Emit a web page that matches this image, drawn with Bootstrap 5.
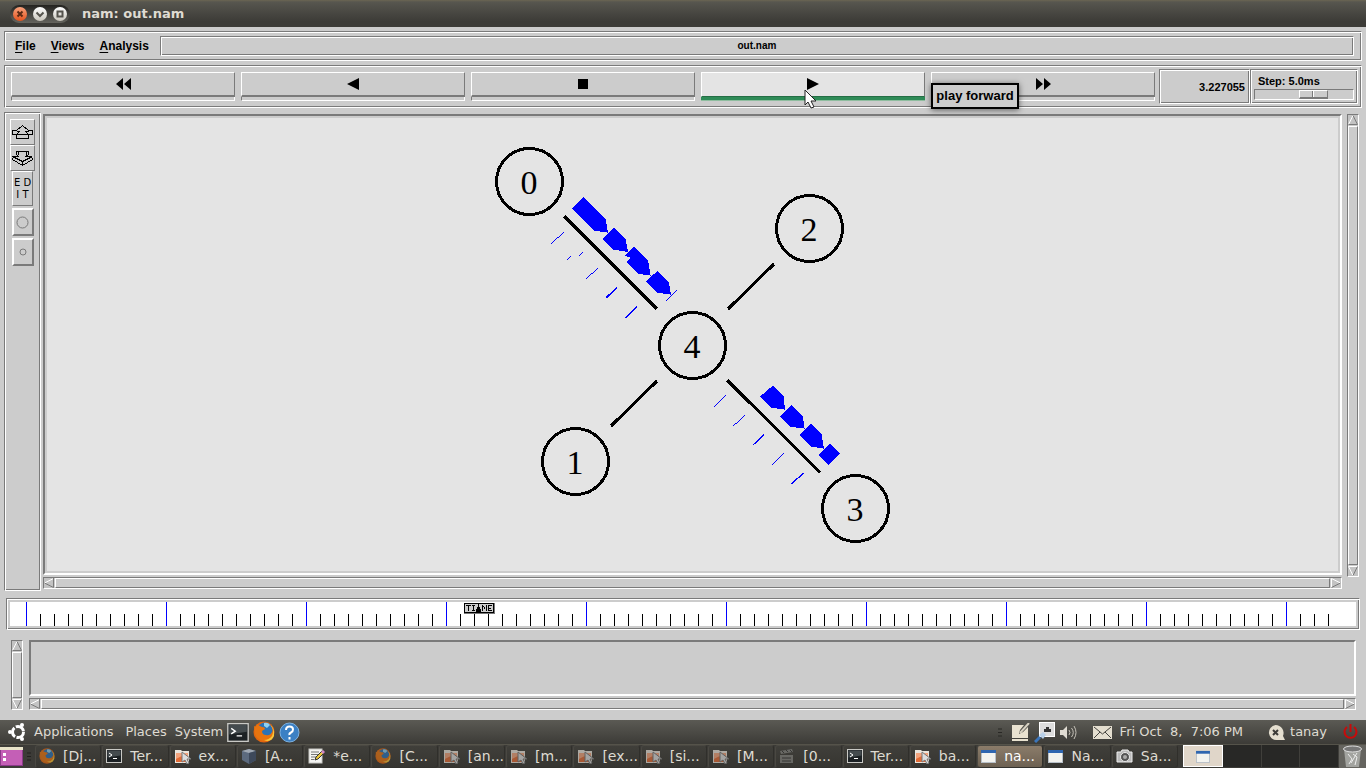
<!DOCTYPE html>
<html lang="en">
<head>
<meta charset="utf-8">
<meta name="viewport" content="width=device-width, initial-scale=1">
<title>nam: out.nam</title>
<link href="https://cdn.jsdelivr.net/npm/bootstrap@5.3.0/dist/css/bootstrap.min.css" rel="stylesheet">
<style>
:root { --face:#cccccc; --dark:#7a7a7a; --cream:#dfdbd2; }
body { background:var(--face); color:#000; font:bold 12px/16px "Liberation Sans",Arial,sans-serif; overflow:hidden; }
button { font:inherit; color:inherit; border-radius:0; padding:0; }
.shape { display:block; flex:none; }
/* window frame */
.titlebar { height:27px; padding-left:10px; background:linear-gradient(#6b6552 0,#57564f 2px,#3c3b37 80%); color:var(--cream); font:bold 13px/26px "DejaVu Sans",sans-serif; }
.winbtns { height:18px; padding:0 3px; gap:6px; border-radius:9px; background:linear-gradient(#24231f,#65645e); margin-right:12px; }
.winbtns button { width:14px; height:14px; border:0; border-radius:50%; background:linear-gradient(#fff,#c9c5bb); display:flex; }
.winbtns .closer { background:linear-gradient(#f8a27c,#e4521d); }
/* Motif-like reliefs */
.groove { border:1px solid; border-color:var(--dark) #fff #fff var(--dark); box-shadow:inset 1px 1px #fff,inset -1px -1px var(--dark); }
.raised { border:1px solid; border-color:#fff var(--dark) var(--dark) #fff; background:var(--face); }
.raised2 { border:2px solid; border-color:#fff var(--dark) var(--dark) #fff; background:var(--face); }
.sunk { border:2px solid; border-color:var(--dark) #fff #fff var(--dark); }
.menubox { height:30px; margin:4px 4px 4px; padding:4px 7px 5px 10px; }
.menubox .item { color:#000; text-decoration:none; margin-right:15px; line-height:20px; }
.menubox .item::first-letter { text-decoration:underline; text-underline-offset:2px; }
.filename { height:20px; line-height:18px; margin-left:-4px; }
.compact { font-size:11px; }
.filename.compact { font-size:10px; }
.toolbox { height:43px; margin:0 4px; padding:3px 3px 2px 2px; }
.playrow { padding:3px 4px 0 4px; gap:6px; }
.playbtn { height:29px; border:0; background:none; width:100%; }
.playbtn .top { flex:1; border:1px solid; border-color:#fff var(--dark) var(--dark) #fff; border-bottom-width:2px; }
.playbtn .strip { height:4px; border:1px solid; border-color:transparent #fff #fff var(--dark); border-top:0; }
.playbtn.hot .top { background:#e4e4e4; border-bottom:1px solid #246e45; padding-bottom:1px; }
.playbtn.hot .strip { background:#2e8b57; border:0; border-bottom:1px solid #8fbd9f; }
.tip { left:calc(100% + 6px); top:11px; width:88px; height:26px; border:2px solid #000; background:var(--face); font-size:13px; line-height:22px; text-align:center; white-space:nowrap; box-shadow:0 1px 6px rgba(0,0,0,.55); z-index:5; }
.pointer { left:calc(50% - 9px); top:17px; z-index:6; pointer-events:none; }
.clock { width:91px; height:35px; padding-right:4px; }
.stepper { width:108px; height:35px; padding:3px 3px 0; }
.stepper label { line-height:16px; padding-left:4px; display:block; }
.stepper input { appearance:none; display:block; width:100%; height:11px; margin:0; background:var(--face); border:1px solid; border-color:var(--dark) #fff #fff var(--dark); }
.stepper input::-webkit-slider-thumb { appearance:none; width:29px; height:9px; border:1px solid; border-color:#fff var(--dark) var(--dark) #fff; border-bottom-width:2px; background:linear-gradient(90deg,var(--face) 12px,var(--dark) 12px,var(--dark) 13px,#fff 13px,#fff 14px,var(--face) 14px); }
/* work area */
.workarea { margin:4px 7px 0 4px; }
.sidebox { width:37px; padding:6px 5px; }
.sidebox button { display:flex; align-items:center; justify-content:center; }
.w25 { width:25px; height:26px; }
.edit { width:21px; height:35px; font:10px/12px "DejaVu Sans",sans-serif; margin-bottom:2px; }
.ring { width:22px; height:28px; margin-bottom:2px; }
.stage { background:#e4e4e4; outline:2px solid var(--face); outline-offset:-4px; }
.canvascol { padding-top:2px; margin:0 5px 2px 2px; }
.vbar { margin:2px 0 14px; }
.below { margin-top:2px; }
.nodes circle { fill:none; stroke:#000; stroke-width:3; }
.nodes text { font:34px "Liberation Serif",serif; text-anchor:middle; }
/* scrollbars */
.sbar { background:var(--face); border:1px solid; border-color:var(--dark) #fff #fff var(--dark); display:flex; gap:1px; flex:none; }
.sbar.h { height:12px; }
.sbar.v { width:12px; flex-direction:column; }
.sbar button { border:0; background:none; width:10px; height:10px; flex:none; }
.sbar .grip { flex:1; }
.timeline { height:32px; margin:7px 6px 0; padding:3px; }
.timeline .scale { background:#fff; height:24px; }
.timetag { left:454px; top:1px; }
.notes { margin:10px 10px 10px 11px; height:70px; gap:6px; }
/* desktop panels */
.panel { background:linear-gradient(#5b5a54,#3c3b37); height:24px; color:var(--cream); font:14px/22px "DejaVu Sans",sans-serif; }
.panel a { color:var(--cream); text-decoration:none; font-size:13px; line-height:22px; }
.tasks { height:24px; background:#3c3b37; border-top:1px solid #55534a; color:var(--cream); }
.task { flex:1 1 0; min-width:0; border:1px solid #33322e; border-color:#4b4943 #302f2b #33322e #4a4842; border-radius:3px; background:linear-gradient(#403f3a,#363531); color:var(--cream); font:14px/20px "DejaVu Sans",sans-serif; padding:0 0 2px 3px; gap:8px; display:flex; align-items:center; margin-right:1px; white-space:nowrap; }
.task.cur { background:linear-gradient(#8b7c6a,#6d6152); color:#fff; }
.task.dim svg { opacity:.65; }
.pager { width:156px; height:22px; background:#282826; }
.pager div { flex:1; border-right:1px solid #403f3b; }
.pager .on { background:#e0d6c9; border:1px solid #fff; }
</style>
</head>
<body class="d-flex flex-column vh-100">
<svg width="0" height="0" class="position-absolute" aria-hidden="true">
 <defs>
  <symbol id="al" viewBox="0 0 10 10"><rect width="10" height="10" fill="#c3c3c3"/><path d="M9.500 .5L.5 5" stroke="#fff" fill="none"/><path d="M.5 5L9.500 9.500V0" stroke="#7a7a7a" fill="none"/></symbol>
  <symbol id="ar" viewBox="0 0 10 10"><rect width="10" height="10" fill="#c3c3c3"/><path d="M.5 9.500V.5L9.500 5" stroke="#fff" fill="none"/><path d="M9.500 5L.5 9.500" stroke="#7a7a7a" fill="none"/></symbol>
  <symbol id="au" viewBox="0 0 10 10"><rect width="10" height="10" fill="#c3c3c3"/><path d="M.5 9.500L5 .5" stroke="#fff" fill="none"/><path d="M5 .5L9.500 9.500H.5" stroke="#7a7a7a" fill="none"/></symbol>
  <symbol id="ad" viewBox="0 0 10 10"><rect width="10" height="10" fill="#c3c3c3"/><path d="M9.500 .5H.5L5 9.500" stroke="#fff" fill="none"/><path d="M5 9.500L9.500 .5" stroke="#7a7a7a" fill="none"/></symbol>
  <symbol id="term" viewBox="0 0 16 14"><rect x=".5" y=".5" width="15" height="13" fill="#1c2124" stroke="#c9c9c5"/><path d="M1.500 1.500h13v5l-13 2z" fill="#444b4e"/><path d="M3 4l3 2-3 2M7 9.500h4" stroke="#fff" fill="none"/></symbol>
  <symbol id="fox" viewBox="0 0 22 22"><circle cx="11" cy="11" r="10.500" fill="#e2660f"/><circle cx="12" cy="9" r="7.500" fill="#2a73b8"/><path d="M11 2q4-1 6 2l-3 3-3-2z" fill="#8fd0ef"/><path d="M1 5l2 1 1-3q2 2 5 3 3 0 3 2l-3 2q0 4 4 4 4 1 6-3 2 0 1 3-3 6-9 6-7-1-9-7z" fill="#e8740f"/><path d="M17 4q5 5 2 11-3 4-8 4 7 3 10-4 1-8-4-11z" fill="#f9c63a"/></symbol>
  <symbol id="fold" viewBox="0 0 17 16"><path d="M1 15V2h6l1 1h7v12z" fill="#e9e4dc"/><path d="M2 14V5h12v9z" fill="#e26b36"/><path d="M2 5h12v3q-6-1-12 3z" fill="#f2a37c"/><path d="M8 4v10l3-2 2 4 2-1-2-4h4z" fill="#ddd" stroke="#777"/></symbol>
  <symbol id="cube" viewBox="0 0 16 16"><path d="M8 1l7 2v9l-7 4-7-4V3z" fill="#5c6a7e"/><path d="M8 1l7 2-7 2-7-2z" fill="#a0a8b3"/><path d="M8 5l7-2v9l-7 4z" fill="#3e495b"/></symbol>
  <symbol id="note" viewBox="0 0 17 16"><rect x="1" y="1" width="13" height="14" fill="#f4f4f2" stroke="#c8c8c4"/><path d="M3 4h8M3 6.500h7M3 9h6M3 11.500h3" stroke="#777"/><path d="M7 12l1-3 6-6 2 2-6 6z" fill="#e9c53b" stroke="#333"/><path d="M13 4l2-2 2 2-2 2z" fill="#d58ac9"/></symbol>
  <symbol id="film" viewBox="0 0 16 16"><path d="M1 7h13v8H1zM1 3l12-2 1 3L2 6z" fill="#81817d"/><path d="M3 3l2 2M7 2l2 2M11 2l2 2M3 10h9M3 13h9" stroke="#333"/></symbol>
  <symbol id="win" viewBox="0 0 15 14"><rect x=".5" y="1.500" width="14" height="12" fill="#f3f3ef" stroke="#b8c0c8"/><path d="M0 1h15v3H0z" fill="#2f66b0"/></symbol>
  <symbol id="cam" viewBox="0 0 17 16"><path d="M1 4h4l1-2h6l1 2h3v10H1z" fill="#bbb" stroke="#eee"/><circle cx="9" cy="9" r="4.500" fill="#555" stroke="#e9e9e9"/><circle cx="9" cy="9" r="2" fill="#aaa"/></symbol>
 </defs>
</svg>

<header class="titlebar d-flex align-items-center flex-shrink-0">
 <div class="winbtns d-flex align-items-center">
  <button class="closer" aria-label="Close"><svg class="shape" width="14" height="14"><path d="M4.500 4.500l5 5m0-5l-5 5" stroke="#5c2a14" stroke-width="2"/></svg></button>
  <button aria-label="Minimize"><svg class="shape" width="14" height="14"><path d="M3.500 5.500L7 9l3.500-3.500" stroke="#55534c" stroke-width="2" fill="none"/></svg></button>
  <button aria-label="Maximize"><svg class="shape" width="14" height="14"><rect x="4.500" y="4.500" width="5" height="5" stroke="#55534c" stroke-width="2" fill="none"/></svg></button>
 </div>
 <span>nam: out.nam</span>
</header>

<nav class="menubox groove d-flex flex-shrink-0">
 <a class="item d-block" href="#">File</a><a class="item d-block" href="#">Views</a><a class="item d-block" href="#">Analysis</a>
 <div class="filename groove compact flex-grow-1 text-center">out.nam</div>
</nav>

<section class="toolbox groove d-flex flex-shrink-0">
 <div class="playrow d-flex flex-grow-1">
  <div class="flex-fill w-100"><button class="playbtn d-flex flex-column align-items-stretch" aria-label="Rewind"><span class="top d-flex justify-content-center align-items-center"><svg class="shape" width="15" height="12"><path d="M0 6l7-6v12zM8 6l7-6v12z"/></svg></span><span class="strip"></span></button></div>
  <div class="flex-fill w-100"><button class="playbtn d-flex flex-column align-items-stretch" aria-label="Play backward"><span class="top d-flex justify-content-center align-items-center"><svg class="shape" width="12" height="12"><path d="M0 6l12-6v12z"/></svg></span><span class="strip"></span></button></div>
  <div class="flex-fill w-100"><button class="playbtn d-flex flex-column align-items-stretch" aria-label="Stop"><span class="top d-flex justify-content-center align-items-center"><svg class="shape" width="10" height="10"><path d="M0 0h10v10H0z"/></svg></span><span class="strip"></span></button></div>
  <div class="flex-fill w-100 position-relative"><button class="playbtn hot d-flex flex-column align-items-stretch" aria-label="Play forward"><span class="top d-flex justify-content-center align-items-center"><svg class="shape" width="12" height="12"><path d="M0 0l12 6-12 6z"/></svg></span><span class="strip"></span></button>
   <div class="tip position-absolute">play forward</div>
   <svg class="pointer position-absolute" width="13" height="20"><path d="M1 1v15l3-3 3 6 3-1-3-6h5z" fill="#fff" stroke="#222"/></svg>
  </div>
  <div class="flex-fill w-100"><button class="playbtn d-flex flex-column align-items-stretch" aria-label="Fast forward"><span class="top d-flex justify-content-center align-items-center"><svg class="shape" width="15" height="12"><path d="M0 0l7 6-7 6zM8 0l7 6-7 6z"/></svg></span><span class="strip"></span></button></div>
 </div>
 <div class="clock groove compact d-flex align-items-center justify-content-end flex-shrink-0">3.227055</div>
 <div class="stepper groove compact flex-shrink-0"><label for="step">Step: 5.0ms</label><input id="step" type="range" min="0" max="100" value="64"></div>
</section>

<main class="workarea d-flex flex-grow-1">
 <aside class="sidebox groove flex-shrink-0 d-flex flex-column align-items-center">
  <button class="w25 raised" aria-label="Zoom in"><svg class="shape" width="21" height="15" fill="none" stroke="#000" shape-rendering="crispEdges"><path d="M10.500 .5l6 5h4v4h-4v4h-12v-4h-4v-4h4z M4.500 9.500l3-3h-3M16.500 9.500l-3-3h3M5 9.500h11"/></svg></button>
  <button class="w25 raised" aria-label="Zoom out"><svg class="shape" width="21" height="15" fill="none" stroke="#000" shape-rendering="crispEdges"><path d="M4.500 .5h12v3l-3 2h6l1 3-10 6-10-6 1-3h5l-2-2zM.5 5.500l10 5 10-5M10.500 10v4M6.500 .5v3M14.500 .5v3"/></svg></button>
  <button class="edit raised">E D<br>I T</button>
  <button class="ring raised2" aria-label="Larger nodes"><svg class="shape" width="13" height="13"><circle cx="6.500" cy="6.500" r="5.500" fill="none" stroke="#7a7a7a"/></svg></button>
  <button class="ring raised2" aria-label="Smaller nodes"><svg class="shape" width="8" height="8"><circle cx="4" cy="4" r="3" fill="none" stroke="#7a7a7a"/></svg></button>
 </aside>
 <div class="canvascol d-flex flex-column flex-grow-1">
  <div class="stage sunk flex-grow-1 d-flex align-items-center justify-content-center">
   <svg class="nodes" width="461" height="440" viewBox="462 125 461 440">
    <g shape-rendering="crispEdges">
    <circle cx="529.500" cy="181.500" r="33"/><circle cx="809.500" cy="228.500" r="33"/><circle cx="692.500" cy="345.500" r="33"/><circle cx="575.500" cy="461.500" r="33"/><circle cx="855.500" cy="508.500" r="33"/>
    <path d="M564.500 216.500L657 309M727.500 380.500L820 472.500M728 309L774 264M657 381L611 426" stroke="#000" stroke-width="3"/>
    </g>
    <text x="529" y="194">0</text><text x="809" y="241">2</text><text x="692" y="358">4</text><text x="575" y="474">1</text><text x="855" y="521">3</text>
    <g transform="translate(480 130) scale(.33333)" fill="#00f" shape-rendering="crispEdges">
     <path d="M310 202l67 65 7 41-41-6-66-66zM402 294l35 34 7 38-43-7-34-32zM462 351l42 40 8 46-39-6-34-34 14-13-17-7zM532 423l34 32 7 39-43-6-33-33z"/>
     <path d="M213 342l38-35M262 389l10-10M297 377l11-10M319 446l34-31M558 513l32-32" stroke="#00f" stroke-width="3"/>
     <path d="M379 503l33-31M436 564l34-34" stroke="#00f" stroke-width="5"/>
    </g>
    <g transform="translate(690 300) scale(.33333)" fill="#00f" shape-rendering="crispEdges">
     <path d="M248 257l33 32 4 40-41-6-34-33zM305 315l33 33 6 38-43-6-31-31zM363 371l31 29 8 46-41-7-33-33zM420 432l30 30-33 33-32-30z"/>
     <path d="M72 321l35-35M130 378l35-32" stroke="#00f" stroke-width="3"/>
     <path d="M190 434l33-31M247 494l34-34M304 551l37-31" stroke="#00f" stroke-width="4"/>
    </g>
   </svg>
  </div>
  <div class="sbar h below"><button aria-label="Scroll left"><svg class="shape" width="10" height="10"><use href="#al"/></svg></button><div class="grip raised"></div><button aria-label="Scroll right"><svg class="shape" width="10" height="10"><use href="#ar"/></svg></button></div>
 </div>
 <div class="sbar v vbar"><button aria-label="Scroll up"><svg class="shape" width="10" height="10"><use href="#au"/></svg></button><div class="grip raised"></div><button aria-label="Scroll down"><svg class="shape" width="10" height="10"><use href="#ad"/></svg></button></div>
</main>

<section class="timeline groove flex-shrink-0">
 <div class="scale position-relative">
  <svg class="shape" width="100%" height="24" shape-rendering="crispEdges">
   <defs><pattern id="ticks" x="16" y="0" width="140" height="24" patternUnits="userSpaceOnUse"><path d="M0 0h1v24H0z" fill="#00f"/><path d="M14 12h1v12h-1zM28 12h1v12h-1zM42 12h1v12h-1zM56 12h1v12h-1zM70 12h1v12h-1zM84 12h1v12h-1zM98 12h1v12h-1zM112 12h1v12h-1zM126 12h1v12h-1z"/></pattern></defs>
   <rect x="16" width="1310" height="24" fill="url(#ticks)"/>
  </svg>
  <svg class="timetag position-absolute" width="31" height="11" shape-rendering="crispEdges" fill="none" stroke="#000"><path d="M0 0h31v11H0z" fill="#777" stroke="none"/><path d="M.5 .5h29v9H.5z" fill="#ccc"/><path d="M2 2.500h5M4.500 2v6M8 2.500h3M9.500 2v6M8 7.500h3M18.500 8V2M19 3.500h1M20.500 4v2M21.500 3.500h1M22.500 2v6M28 2.500h-3.500v5H28M25 5.500h2"/><path d="M14 0h1v4h1v2h1v3h-5V6h1V4h1z" fill="#000" stroke="none"/></svg>
 </div>
</section>

<section class="notes d-flex flex-shrink-0">
 <div class="sbar v"><button aria-label="Scroll up"><svg class="shape" width="10" height="10"><use href="#au"/></svg></button><div class="grip raised"></div><button aria-label="Scroll down"><svg class="shape" width="10" height="10"><use href="#ad"/></svg></button></div>
 <div class="d-flex flex-column flex-grow-1"><div class="sunk flex-grow-1"></div>
 <div class="sbar h below"><button aria-label="Scroll left"><svg class="shape" width="10" height="10"><use href="#al"/></svg></button><div class="grip raised"></div><button aria-label="Scroll right"><svg class="shape" width="10" height="10"><use href="#ar"/></svg></button></div></div>
</section>

<nav class="panel d-flex align-items-center flex-shrink-0 px-2">
 <svg class="shape me-2" width="18" height="18"><circle cx="10" cy="9" r="5.500" fill="none" stroke="#fff" stroke-width="3" stroke-dasharray="10 1.500"/><circle cx="2" cy="9" r="2" fill="#fff"/><circle cx="14" cy="2" r="2" fill="#fff"/><circle cx="14" cy="16" r="2" fill="#fff"/></svg>
 <a href="#" class="me-2">Applications</a><a href="#" class="ms-1 me-2">Places</a><a href="#" class="me-1">System</a>
 <svg class="shape me-1" width="22" height="19"><use href="#term"/></svg>
 <svg class="shape me-1" width="22" height="22"><use href="#fox"/></svg>
 <svg class="shape" width="21" height="21"><circle cx="10.500" cy="10.500" r="9.500" fill="#3b80c4" stroke="#7db2e2"/><path d="M7 8q0-3.500 3.500-3.500T14 7.500q0 2-2 3t-1.500 2.500M10.500 15v2.500" stroke="#fff" stroke-width="2" fill="none"/></svg>
 <span class="flex-grow-1"></span>
 <svg class="shape me-2" width="5" height="9"><path d="M0 1h4M0 4.500h4M0 8h4" stroke="#292825"/></svg>
 <svg class="shape me-1" width="19" height="19"><path d="M1 2h12l-4 5-1 4 4-2 5-5v11H1zM1 16h16v2H1z" fill="#e9e2d0"/><path d="M18 0L9 10" stroke="#d8d2c2" stroke-width="2"/></svg>
 <svg class="shape" width="22" height="22"><rect x="5.500" y="1.500" width="15" height="14" fill="#ddd" stroke="#fff"/><path d="M10 11V8h2V6h3v2h2v3z" fill="#333"/><path d="M1 21l5-5" stroke="#3b75ba" stroke-width="3"/><path d="M5 14l4-3 3 3-3 4z" fill="#b8d0e8"/></svg>
 <svg class="shape ms-1" width="17" height="15"><path d="M0 5h3l4-4v13l-4-4H0z" fill="#dfdbd2"/><path d="M9 5q2 2.500 0 5M11.500 3q3.500 4.500 0 9M14 1q4 6.500 0 13" fill="none" stroke="#c5c1b8"/></svg>
 <svg class="shape ms-3 me-2" width="19" height="13"><path d="M0 0h19v13H0z" fill="#e4decf"/><path d="M1 1l8.500 7L18 1M1 12l6-6M18 12l-6-6" stroke="#44433e" fill="none"/></svg>
 <a href="#">Fri Oct&nbsp; 8,&nbsp; 7:06 PM</a>
 <svg class="shape ms-4 me-1" width="19" height="17"><path d="M8.500 1a7.500 7.500 0 1 0 2 15H18l-2-4A8 8 0 0 0 8.500 1z" fill="#e4decf"/><path d="M6 6l5 5m0-5l-5 5" stroke="#3c3b37" stroke-width="2"/></svg>
 <a href="#" class="me-3">tanay</a>
 <svg class="shape" width="15" height="16" fill="none" stroke="#c80a0a" stroke-width="2"><path d="M4 3a6 6 0 1 0 7 0M7.500 0v8"/></svg>
</nav>
<footer class="tasks d-flex align-items-stretch flex-shrink-0">
 <svg class="shape me-1" width="23" height="22"><rect y="2" width="23" height="19" fill="#8b3a8a"/><path d="M1 5h21v15H1z" fill="#c45fb6"/><path d="M0 2h23v3H0z" fill="#e8e3c9"/><path d="M3 8h3v3H3zM3 13h3v3H3z" fill="#fff"/></svg>
 <svg class="shape me-1" width="4" height="22"><path d="M0 8h4M0 11.500h4M0 15h4" stroke="#22211f"/></svg>
 <button class="task dim"><svg class="shape" width="16" height="16"><use href="#fox"/></svg>[Dj...</button>
 <button class="task"><svg class="shape" width="16" height="14"><use href="#term"/></svg>Ter...</button>
 <button class="task"><svg class="shape" width="17" height="16"><use href="#fold"/></svg>ex...</button>
 <button class="task"><svg class="shape" width="16" height="16"><use href="#cube"/></svg>[A...</button>
 <button class="task"><svg class="shape" width="17" height="16"><use href="#note"/></svg>*e...</button>
 <button class="task dim"><svg class="shape" width="16" height="16"><use href="#fox"/></svg>[C...</button>
 <button class="task dim"><svg class="shape" width="17" height="16"><use href="#fold"/></svg>[an...</button>
 <button class="task dim"><svg class="shape" width="17" height="16"><use href="#fold"/></svg>[m...</button>
 <button class="task dim"><svg class="shape" width="17" height="16"><use href="#fold"/></svg>[ex...</button>
 <button class="task dim"><svg class="shape" width="17" height="16"><use href="#fold"/></svg>[si...</button>
 <button class="task dim"><svg class="shape" width="17" height="16"><use href="#fold"/></svg>[M...</button>
 <button class="task dim"><svg class="shape" width="16" height="16"><use href="#film"/></svg>[0...</button>
 <button class="task"><svg class="shape" width="16" height="14"><use href="#term"/></svg>Ter...</button>
 <button class="task"><svg class="shape" width="17" height="16"><use href="#fold"/></svg>ba...</button>
 <button class="task cur"><svg class="shape" width="15" height="14"><use href="#win"/></svg>na...</button>
 <button class="task"><svg class="shape" width="15" height="14"><use href="#win"/></svg>Na...</button>
 <button class="task"><svg class="shape" width="17" height="16"><use href="#cam"/></svg>Sa...</button>
 <div class="pager d-flex flex-shrink-0 ms-1"><div class="on d-flex align-items-center justify-content-center"><svg class="shape" width="14" height="13"><use href="#win"/></svg></div><div></div><div></div><div></div></div>
 <svg class="shape" width="27" height="23"><path d="M0 0h27v23H0z" fill="#65645f"/><path d="M5 4h17l-2 18H7z" fill="#a2a39f"/><ellipse cx="13.500" cy="4" rx="9" ry="3" fill="#777" stroke="#ddd"/><path d="M9 9l4 5-3 5M14 9l4 3-2 8M18 8l-6 10" stroke="#eee" fill="none"/></svg>
</footer>
<script src="https://cdn.jsdelivr.net/npm/bootstrap@5.3.0/dist/js/bootstrap.bundle.min.js"></script>
</body>
</html>
